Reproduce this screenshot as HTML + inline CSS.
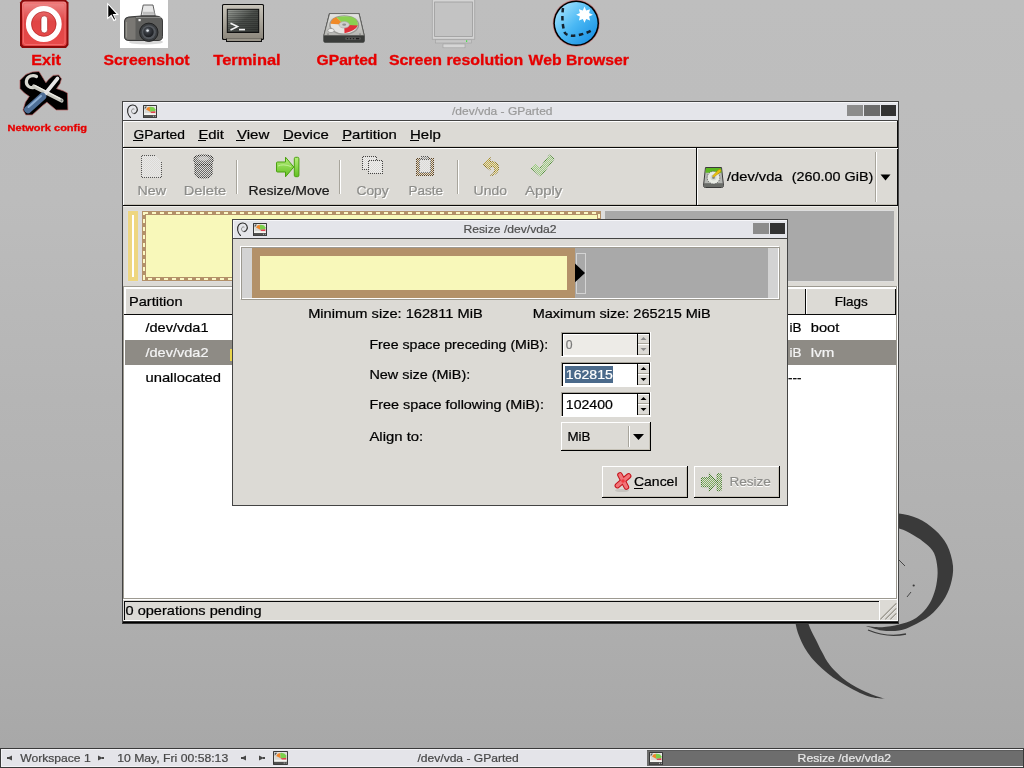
<!DOCTYPE html>
<html><head><meta charset="utf-8"><title>GParted</title>
<style>
html,body{margin:0;padding:0;width:1024px;height:768px;overflow:hidden;background:#b0b0b0;}
svg{display:block;will-change:transform;}
text{font-family:"Liberation Sans",sans-serif;}
</style></head><body>
<svg width="1024" height="768" viewBox="0 0 1024 768" shape-rendering="crispEdges">
<defs><linearGradient id="bg" x1="0" y1="0" x2="0" y2="1"><stop offset="0" stop-color="#bebebe"/><stop offset="0.26" stop-color="#bcbcbc"/><stop offset="0.52" stop-color="#b5b5b5"/><stop offset="0.78" stop-color="#afafaf"/><stop offset="0.945" stop-color="#a9a9a9"/><stop offset="1" stop-color="#a7a7a7"/></linearGradient></defs>
<rect x="0" y="0" width="1024" height="768" fill="url(#bg)" />
<defs><linearGradient id="exitg" x1="0" y1="0" x2="0" y2="1"><stop offset="0" stop-color="#ee8a8a"/><stop offset="0.45" stop-color="#e04545"/><stop offset="1" stop-color="#e84a4a"/></linearGradient><linearGradient id="globeg" x1="0" y1="0" x2="1" y2="1"><stop offset="0" stop-color="#b8ecff"/><stop offset="0.5" stop-color="#4ab8f4"/><stop offset="1" stop-color="#1088e0"/></linearGradient><linearGradient id="scrg" x1="0" y1="0" x2="1" y2="1"><stop offset="0" stop-color="#9a9e98"/><stop offset="0.5" stop-color="#4a4e4a"/><stop offset="1" stop-color="#353835"/></linearGradient><linearGradient id="bezg" x1="0" y1="0" x2="0" y2="1"><stop offset="0" stop-color="#c8c4ba"/><stop offset="1" stop-color="#8c877c"/></linearGradient><linearGradient id="camg" x1="0" y1="0" x2="1" y2="0"><stop offset="0" stop-color="#6a6a66"/><stop offset="0.3" stop-color="#555552"/><stop offset="1" stop-color="#707070"/></linearGradient><radialGradient id="lensg" cx="0.4" cy="0.35" r="0.6"><stop offset="0" stop-color="#9aa0a8"/><stop offset="0.4" stop-color="#3a3e44"/><stop offset="1" stop-color="#1e2024"/></radialGradient><linearGradient id="hddg" x1="0" y1="0" x2="0" y2="1"><stop offset="0" stop-color="#e6e6e4"/><stop offset="1" stop-color="#b4b4b0"/></linearGradient></defs>
<text x="31.2" y="65" font-size="14.2" fill="#e60000" font-weight="bold" textLength="29.600000000000005" lengthAdjust="spacingAndGlyphs" stroke="#e60000" stroke-width="0.3">Exit</text>
<text x="103.5" y="65" font-size="14.2" fill="#e60000" font-weight="bold" textLength="86.1" lengthAdjust="spacingAndGlyphs" stroke="#e60000" stroke-width="0.3">Screenshot</text>
<text x="213.3" y="65" font-size="14.2" fill="#e60000" font-weight="bold" textLength="67.4" lengthAdjust="spacingAndGlyphs" stroke="#e60000" stroke-width="0.3">Terminal</text>
<text x="316.6" y="65" font-size="14.2" fill="#e60000" font-weight="bold" textLength="60.79999999999999" lengthAdjust="spacingAndGlyphs" stroke="#e60000" stroke-width="0.3">GParted</text>
<text x="388.9" y="65" font-size="14.2" fill="#e60000" font-weight="bold" textLength="134.40000000000006" lengthAdjust="spacingAndGlyphs" stroke="#e60000" stroke-width="0.3">Screen resolution</text>
<text x="528.6" y="65" font-size="14.2" fill="#e60000" font-weight="bold" textLength="100.29999999999993" lengthAdjust="spacingAndGlyphs" stroke="#e60000" stroke-width="0.3">Web Browser</text>
<text x="7.6" y="131" font-size="9.4" fill="#e60000" font-weight="bold" textLength="79.4" lengthAdjust="spacingAndGlyphs" stroke="#e60000" stroke-width="0.3">Network config</text>
<g shape-rendering="geometricPrecision"><path d="M22 0 H66 L68.5 2.5 V45 L66 48 H22 L20 45.5 V2.5 Z" fill="#8a0a0a"/><rect x="22" y="1.5" width="44.5" height="44.5" rx="3" fill="url(#exitg)"/><rect x="23.5" y="3" width="41.5" height="41.5" rx="2.5" fill="none" stroke="#f26a6a" stroke-width="1"/><circle cx="43.8" cy="24" r="15.2" fill="none" stroke="#ffffff" stroke-width="5.4"/><circle cx="43.8" cy="24" r="12.3" fill="none" stroke="#a01010" stroke-width="0.8" opacity="0.6"/><rect x="41" y="15.8" width="6.6" height="17.2" rx="3.3" fill="#ffffff" stroke="#a01010" stroke-width="0.6"/></g>
<rect x="120" y="0" width="48" height="48" fill="#ffffff" />
<g shape-rendering="geometricPrecision"><ellipse cx="146" cy="42" rx="17" ry="2.5" fill="#d8d8d8"/><path d="M143.2 5 H153 L155.2 15.8 H141 Z" fill="#e6e6e6" stroke="#505050" stroke-width="0.9"/><rect x="142.8" y="11.8" width="11.6" height="3" fill="#bdbdbd"/><path d="M124.5 21 Q124.5 17.5 128.5 17 L141 16 H156 Q162.5 16.5 162.5 21 V36.5 Q162.5 40.5 158 40.5 H129 Q124.5 40.5 124.5 37 Z" fill="#5e5e5c" stroke="#2e2e2e" stroke-width="0.9"/><path d="M125.3 21.5 Q125.5 18.5 129 18 L135.5 17.6 V39.6 H129 Q125.3 39.6 125.3 36.5 Z" fill="#7a7874"/><path d="M126.5 22 V37.5" stroke="#96948e" stroke-width="1.2"/><path d="M136 17.5 H161" stroke="#8a8a88" stroke-width="1"/><rect x="138.5" y="19" width="2.2" height="2.2" fill="#f0f0f0"/><circle cx="148.8" cy="32.3" r="9.2" fill="#3a3d40" stroke="#1e1e1e" stroke-width="0.9"/><circle cx="148.8" cy="32.3" r="7" fill="#55595e"/><circle cx="148.5" cy="32" r="5.2" fill="url(#lensg)"/><circle cx="147.6" cy="30.6" r="1.2" fill="#e8eef4"/></g>
<g shape-rendering="geometricPrecision"><path d="M107.2 2.5 L107.2 19.6 L111 16.2 L113.6 21.2 L116.4 20 L114 15.2 L119 15 Z" fill="#ffffff"/><path d="M108.3 5 L108.3 17.2 L111.4 14.4 L114.2 19.6 L115.1 19.2 L112.6 14.1 L116.4 13.9 Z" fill="#000000"/></g>
<g shape-rendering="geometricPrecision"><rect x="222" y="4" width="42" height="36" rx="1.5" fill="#0c0c0c"/><rect x="223" y="5" width="40" height="34" rx="1" fill="url(#bezg)"/><rect x="226.8" y="8.8" width="32.4" height="24.2" fill="#101010"/><rect x="227.8" y="9.8" width="30.4" height="22.2" fill="url(#scrg)"/><rect x="228" y="11" width="30" height="1" fill="#000" opacity="0.18"/><rect x="228" y="13" width="30" height="1" fill="#000" opacity="0.18"/><rect x="228" y="15" width="30" height="1" fill="#000" opacity="0.18"/><rect x="228" y="17" width="30" height="1" fill="#000" opacity="0.18"/><rect x="228" y="19" width="30" height="1" fill="#000" opacity="0.18"/><rect x="228" y="21" width="30" height="1" fill="#000" opacity="0.18"/><rect x="228" y="23" width="30" height="1" fill="#000" opacity="0.18"/><rect x="228" y="25" width="30" height="1" fill="#000" opacity="0.18"/><rect x="228" y="27" width="30" height="1" fill="#000" opacity="0.18"/><rect x="228" y="29" width="30" height="1" fill="#000" opacity="0.18"/><rect x="228" y="31" width="30" height="1" fill="#000" opacity="0.18"/><path d="M230.5 23.2 L237.5 26.6 L230.5 30" fill="none" stroke="#f4f4f4" stroke-width="1.6"/><rect x="239" y="28.8" width="6" height="1.6" fill="#f4f4f4"/><rect x="226" y="38.5" width="36" height="3.5" fill="#111"/><rect x="227" y="38.5" width="34" height="2.5" fill="#9a958a"/></g>
<g shape-rendering="geometricPrecision"><path d="M329 13.2 H359.5 L364.8 36 V40.5 Q364.8 42.8 362 42.8 H326 Q323.3 42.8 323.3 40.5 V36 Z" fill="#3a3c3a"/><path d="M329.6 13.6 H359 L364.2 35.5 H323.8 Z" fill="url(#hddg)" stroke="#5a5a58" stroke-width="0.8"/><ellipse cx="344.2" cy="25" rx="15" ry="9.8" fill="#9a9a96"/><ellipse cx="344.2" cy="24.8" rx="13.6" ry="8.6" fill="#e4e4e2"/><path d="M344.2 24.8 L330.6 23.8 Q331 19 336.5 17.3 Z" fill="#f08a28"/><path d="M344.2 24.8 L336.5 17.3 Q344 15.3 351.5 16.8 Q358.5 19.5 357.8 25.5 L353 28.5 Z" fill="#8ad050"/><path d="M344.2 24.8 L357.8 25.5 Q356 30.5 344.5 33.2 Z" fill="#e0303a"/><ellipse cx="344.2" cy="24.8" rx="5.2" ry="3.2" fill="#d0d0ce" stroke="#a8a8a4" stroke-width="0.6"/><ellipse cx="344.2" cy="24.6" rx="2" ry="1.2" fill="#909090"/><ellipse cx="331" cy="30.5" rx="3.2" ry="2.1" fill="#ececea" stroke="#777" stroke-width="0.5"/><circle cx="328" cy="34" r="0.6" fill="#444"/><circle cx="360" cy="34" r="0.6" fill="#444"/><rect x="345" y="37.2" width="16" height="2.8" rx="1.4" fill="#555654"/><circle cx="347.5" cy="38.6" r="0.7" fill="#1a1a1a"/><circle cx="350.5" cy="38.6" r="0.7" fill="#1a1a1a"/><circle cx="353.5" cy="38.6" r="0.7" fill="#1a1a1a"/><rect x="356" y="37.9" width="3.2" height="1.4" fill="#1a1a1a"/></g>
<g shape-rendering="geometricPrecision"><rect x="432.3" y="-1" width="42.4" height="40.3" fill="#d4d4d4" stroke="#a8a8a8" stroke-width="0.9"/><rect x="434.6" y="2" width="37.8" height="34.4" fill="#c3c3c3" stroke="#9c9c9c" stroke-width="0.8"/><rect x="435.5" y="39.8" width="36" height="3.2" fill="#c8c8c8" stroke="#a0a0a0" stroke-width="0.6"/><rect x="466" y="40.3" width="1.2" height="1.6" fill="#40e040"/><rect x="443" y="44" width="22" height="3.8" fill="#d6d6d6" stroke="#a0a0a0" stroke-width="0.6"/></g>
<g shape-rendering="geometricPrecision"><circle cx="576.2" cy="23.2" r="23.5" fill="#c88080"/><circle cx="576.2" cy="23.2" r="22.8" fill="#000"/><circle cx="576.2" cy="23.2" r="21.3" fill="url(#globeg)"/><path transform="translate(584.5,14.8) scale(1.12) translate(-584.5,-14.8)" d="M584.5 7.5 L586 11 L589.5 9.8 L588.6 13.2 L592 14.8 L588.6 16.4 L589.5 19.8 L586 18.6 L584.5 22 L583 18.6 L579.5 19.8 L580.4 16.4 L577 14.8 L580.4 13.2 L579.5 9.8 L583 11 Z" fill="#ffffff"/><path d="M563 8 C562 15 562 26 565 33 C568 37 575 36 581 34.5 C585 33.5 589 32 592 30" fill="none" stroke="#14222e" stroke-width="2.5" stroke-dasharray="4.5 3.5"/></g>
<g shape-rendering="geometricPrecision"><path d="M20 80.3 L25.9 74.4 L32.2 72 L39 71.5 L45.9 82.7 L48.8 79.3 L53.2 75.4 L58.6 74.9 L61.5 78.8 L60 83.7 L56.6 88.6 L63.5 91 L67.4 93 L67.9 110 L56.2 110 L46.9 102.2 L43 105.2 L32.2 114.9 L25.9 114.9 L23 110 L25.4 102.2 L29.3 96.4 L24.4 93 L20 88.6 Z" fill="#000" stroke="#b86060" stroke-width="0.7"/><path d="M36.5 76.5 C33 74.5 27.5 76 26.5 80.5 C25.5 85 29.5 88.5 34 87.5" fill="none" stroke="#d8d8d0" stroke-width="3.2" stroke-linecap="round"/><path d="M34 86.5 L61.5 100.5" fill="none" stroke="#c8c8c0" stroke-width="4.2" stroke-linecap="round"/><path d="M35 85.5 L60 98.5" fill="none" stroke="#efefe8" stroke-width="1.2" stroke-linecap="round"/><circle cx="61.5" cy="100.5" r="1" fill="#777"/><path d="M45 94 L57.5 78.5" stroke="#e6e6e6" stroke-width="3.6" stroke-linecap="round"/><path d="M28 109.5 L42.5 96.5" stroke="#4e6e96" stroke-width="7.5" stroke-linecap="round"/><path d="M28.5 107 L41 96" stroke="#8eaed2" stroke-width="2" stroke-linecap="round"/></g>
<g shape-rendering="geometricPrecision"><path d="M880.0 512.5 C883.2 512.7 892.7 512.5 899.0 513.5 C905.3 514.5 912.0 515.8 918.0 518.5 C924.0 521.2 930.2 525.6 935.0 530.0 C939.8 534.4 944.0 539.0 947.0 545.0 C950.0 551.0 952.4 559.3 953.0 566.0 C953.6 572.7 952.2 579.2 950.5 585.0 C948.8 590.8 946.4 595.9 943.0 601.0 C939.6 606.1 935.0 611.4 930.0 615.5 C925.0 619.6 918.2 623.0 913.0 625.5 C907.8 628.0 904.2 629.7 899.0 630.5 C893.8 631.3 887.5 631.2 882.0 630.5 C876.5 629.8 868.7 626.8 866.0 626.0 L866.0 626.0 C868.7 626.2 876.5 627.4 882.0 627.2 C887.5 627.0 893.8 625.8 899.0 624.6 C904.2 623.4 908.8 622.1 913.0 619.8 C917.2 617.5 920.9 614.3 924.0 611.0 C927.1 607.7 929.5 604.3 931.5 600.0 C933.5 595.7 935.3 590.2 936.3 585.0 C937.3 579.8 937.9 574.3 937.5 569.0 C937.1 563.7 936.0 557.2 934.0 553.0 C932.0 548.8 928.8 546.4 925.5 543.5 C922.2 540.6 918.4 538.0 914.0 535.5 C909.6 533.0 904.7 529.9 899.0 528.5 C893.3 527.1 883.2 527.2 880.0 527.0 Z" fill="#3a3a3a"/><path d="M794.0 605.0 C794.3 608.3 794.7 619.1 795.8 624.8 C796.8 630.5 798.6 634.8 800.3 639.0 C802.0 643.2 803.9 646.6 806.0 650.0 C808.1 653.4 810.3 656.4 813.0 659.5 C815.7 662.6 818.7 665.5 822.0 668.5 C825.3 671.5 829.0 674.7 833.0 677.5 C837.0 680.3 841.5 682.9 846.0 685.5 C850.5 688.1 855.7 691.0 860.0 693.0 C864.3 695.0 867.8 696.3 872.0 697.3 C876.2 698.3 882.8 698.7 885.0 699.0 L885.0 699.0 C881.8 697.8 872.3 694.9 866.0 692.0 C859.7 689.1 853.0 685.9 847.0 681.5 C841.0 677.1 834.5 670.6 830.3 665.7 C826.1 660.8 824.5 656.5 822.0 652.0 C819.5 647.5 817.5 643.0 815.5 639.0 C813.5 635.0 811.6 632.0 810.0 628.0 C808.4 624.0 807.0 618.8 806.0 615.0 C805.0 611.2 804.3 606.7 804.0 605.0 Z" fill="#3a3a3a"/><path d="M868 630 C880 635 892 637 906 634" fill="none" stroke="#3a3a3a" stroke-width="1.3"/><circle cx="913.7" cy="585.5" r="1.1" fill="#3a3a3a"/><path d="M907 597 L911 592" stroke="#3a3a3a" stroke-width="0.9"/><path d="M899 560 L905 566" stroke="#3a3a3a" stroke-width="0.9"/></g>
<rect x="122" y="101" width="777" height="523" fill="#444444" />
<rect x="123" y="102" width="775" height="18" fill="#e4e5ea" />
<rect x="123" y="102" width="775" height="1" fill="#f6f6f9" />
<rect x="123" y="102" width="1" height="18" fill="#f6f6f9" />
<rect x="123" y="120" width="775" height="1" fill="#444444" />
<g transform="translate(128,111)" shape-rendering="geometricPrecision" fill="none" stroke-linecap="round"><path d="M2.5 6.5 C-0.5 4 -1.5 -1.5 0.8 -4.2 C2.8 -6.6 7.2 -6.6 8.8 -3.6 C10.2 -0.8 8.4 2.6 6 2.6" stroke="#2a2a2a" stroke-width="1.1"/><path d="M6 2.6 C4.2 2.8 3.2 1.2 3.6 -0.6 C3.9 -1.8 5 -2.4 6 -2" stroke="#7a7a7a" stroke-width="0.9"/></g>
<g transform="translate(143,105) scale(1.0)" shape-rendering="geometricPrecision"><rect x="0" y="0" width="14" height="13" rx="0.6" fill="#383838"/><rect x="1" y="1" width="12" height="9.2" fill="#f4f4f0"/><rect x="1.6" y="1.6" width="10.8" height="7.2" fill="#d8d8d4"/><path d="M1.6 1.6 H4 L1.6 4.5 Z" fill="#555"/><path d="M7.2 6.8 L3 4.6 Q4 2 6.8 1.8 Z" fill="#f0862a"/><path d="M7.2 6.8 L6.8 1.8 Q10.8 1.4 12.4 4.2 L12.4 6.3 Z" fill="#7ad04a"/><path d="M7.2 6.8 L12.4 6.3 L12.4 8.2 L8.4 8.2 Z" fill="#e04450"/><rect x="1.6" y="8.2" width="10.8" height="1.2" fill="#f4f4f0"/><rect x="1" y="10.2" width="12" height="2.2" fill="#525250"/><rect x="10" y="10.8" width="1" height="1" fill="#bbb"/><rect x="12" y="10.8" width="0.8" height="1" fill="#bbb"/></g>
<rect x="847" y="105" width="16" height="11" fill="#8c8c8c" />
<rect x="864" y="105" width="16" height="11" fill="#6c6c6c" />
<rect x="881" y="105" width="15" height="11" fill="#333333" />
<text x="452" y="115" font-size="11.6" fill="#9a9a9a" font-weight="normal" textLength="100.5" lengthAdjust="spacingAndGlyphs"  stroke="#9a9a9a" stroke-width="0.22">/dev/vda - GParted</text>
<rect x="123" y="121" width="775" height="501" fill="#dcdad5" />
<rect x="123" y="121" width="775" height="1" fill="#ffffff" />
<rect x="123" y="121" width="1" height="26" fill="#ffffff" />
<rect x="124" y="146" width="773" height="1" fill="#c9c5bb" />
<rect x="123" y="147" width="775" height="1" fill="#0a0a0a" />
<rect x="897" y="121" width="1" height="85" fill="#0a0a0a" />
<rect x="897" y="206" width="1" height="80" fill="#e8e7e3" />
<rect x="897" y="286" width="1" height="335" fill="#ffffff" />
<text x="133.4" y="139" font-size="13.4" fill="#000" font-weight="normal" textLength="51.5" lengthAdjust="spacingAndGlyphs"  stroke="#000" stroke-width="0.22">GParted</text>
<rect x="133" y="140" width="10" height="1" fill="#000" />
<text x="198.4" y="139" font-size="13.4" fill="#000" font-weight="normal" textLength="25.6" lengthAdjust="spacingAndGlyphs"  stroke="#000" stroke-width="0.22">Edit</text>
<rect x="198" y="140" width="8" height="1" fill="#000" />
<text x="236.9" y="139" font-size="13.4" fill="#000" font-weight="normal" textLength="32.4" lengthAdjust="spacingAndGlyphs"  stroke="#000" stroke-width="0.22">View</text>
<rect x="236" y="140" width="9" height="1" fill="#000" />
<text x="283.1" y="139" font-size="13.4" fill="#000" font-weight="normal" textLength="45.6" lengthAdjust="spacingAndGlyphs"  stroke="#000" stroke-width="0.22">Device</text>
<rect x="283" y="140" width="10" height="1" fill="#000" />
<text x="342.2" y="139" font-size="13.4" fill="#000" font-weight="normal" textLength="54.6" lengthAdjust="spacingAndGlyphs"  stroke="#000" stroke-width="0.22">Partition</text>
<rect x="342" y="140" width="9" height="1" fill="#000" />
<text x="410" y="139" font-size="13.4" fill="#000" font-weight="normal" textLength="30.8" lengthAdjust="spacingAndGlyphs"  stroke="#000" stroke-width="0.22">Help</text>
<rect x="410" y="140" width="9" height="1" fill="#000" />
<rect x="123" y="148" width="775" height="1" fill="#ffffff" />
<rect x="123" y="148" width="1" height="57" fill="#ffffff" />
<rect x="124" y="204" width="773" height="1" fill="#c4c0b5" />
<rect x="123" y="205" width="775" height="1" fill="#0a0a0a" />
<text x="138.5" y="196" font-size="13.4" fill="#ffffff" font-weight="normal" textLength="28.5" lengthAdjust="spacingAndGlyphs"  stroke="#ffffff" stroke-width="0.22">New</text>
<text x="137.5" y="195" font-size="13.4" fill="#8d8d8a" font-weight="normal" textLength="28.5" lengthAdjust="spacingAndGlyphs"  stroke="#8d8d8a" stroke-width="0.22">New</text>
<text x="184.7" y="196" font-size="13.4" fill="#ffffff" font-weight="normal" textLength="42.5" lengthAdjust="spacingAndGlyphs"  stroke="#ffffff" stroke-width="0.22">Delete</text>
<text x="183.7" y="195" font-size="13.4" fill="#8d8d8a" font-weight="normal" textLength="42.5" lengthAdjust="spacingAndGlyphs"  stroke="#8d8d8a" stroke-width="0.22">Delete</text>
<text x="248.6" y="195" font-size="13.4" fill="#1a1a1a" font-weight="normal" textLength="81.0" lengthAdjust="spacingAndGlyphs"  stroke="#1a1a1a" stroke-width="0.22">Resize/Move</text>
<text x="357.4" y="196" font-size="13.4" fill="#ffffff" font-weight="normal" textLength="32.3" lengthAdjust="spacingAndGlyphs"  stroke="#ffffff" stroke-width="0.22">Copy</text>
<text x="356.4" y="195" font-size="13.4" fill="#8d8d8a" font-weight="normal" textLength="32.3" lengthAdjust="spacingAndGlyphs"  stroke="#8d8d8a" stroke-width="0.22">Copy</text>
<text x="409.4" y="196" font-size="13.4" fill="#ffffff" font-weight="normal" textLength="34.7" lengthAdjust="spacingAndGlyphs"  stroke="#ffffff" stroke-width="0.22">Paste</text>
<text x="408.4" y="195" font-size="13.4" fill="#8d8d8a" font-weight="normal" textLength="34.7" lengthAdjust="spacingAndGlyphs"  stroke="#8d8d8a" stroke-width="0.22">Paste</text>
<text x="474.6" y="196" font-size="13.4" fill="#ffffff" font-weight="normal" textLength="33.5" lengthAdjust="spacingAndGlyphs"  stroke="#ffffff" stroke-width="0.22">Undo</text>
<text x="473.6" y="195" font-size="13.4" fill="#8d8d8a" font-weight="normal" textLength="33.5" lengthAdjust="spacingAndGlyphs"  stroke="#8d8d8a" stroke-width="0.22">Undo</text>
<text x="526.1" y="196" font-size="13.4" fill="#ffffff" font-weight="normal" textLength="37.1" lengthAdjust="spacingAndGlyphs"  stroke="#ffffff" stroke-width="0.22">Apply</text>
<text x="525.1" y="195" font-size="13.4" fill="#8d8d8a" font-weight="normal" textLength="37.1" lengthAdjust="spacingAndGlyphs"  stroke="#8d8d8a" stroke-width="0.22">Apply</text>
<rect x="236" y="160" width="1" height="34" fill="#a8a59c" />
<rect x="237" y="160" width="1" height="34" fill="#ffffff" />
<rect x="339" y="160" width="1" height="34" fill="#a8a59c" />
<rect x="340" y="160" width="1" height="34" fill="#ffffff" />
<rect x="457" y="160" width="1" height="34" fill="#a8a59c" />
<rect x="458" y="160" width="1" height="34" fill="#ffffff" />
<rect x="696" y="148" width="1" height="57" fill="#0a0a0a" />
<rect x="697" y="148" width="1" height="57" fill="#ffffff" />
<text x="727" y="180.5" font-size="13.4" fill="#000" font-weight="normal" textLength="55.5" lengthAdjust="spacingAndGlyphs"  stroke="#000" stroke-width="0.22">/dev/vda</text>
<text x="791.8" y="180.5" font-size="13.4" fill="#000" font-weight="normal" textLength="81.5" lengthAdjust="spacingAndGlyphs"  stroke="#000" stroke-width="0.22">(260.00 GiB)</text>
<rect x="875" y="152" width="1" height="50" fill="#a8a59c" />
<rect x="876" y="152" width="1" height="50" fill="#ffffff" />
<path d="M880.5 174.5 L890.5 174.5 L885.5 180.5 Z" fill="#000" shape-rendering="geometricPrecision"/>
<rect x="123" y="206" width="775" height="1" fill="#eeede9" />
<rect x="127" y="210" width="767" height="72" fill="#dddddd" />
<rect x="128" y="211" width="10" height="70" fill="#eed680" />
<rect x="132" y="215" width="2" height="62" fill="#ffffff" />
<rect x="142" y="211" width="459" height="70" fill="#b39169" />
<rect x="146" y="215" width="451" height="62" fill="#f8f8ba" />
<rect x="144" y="212" width="4" height="2" fill="#fbf8c4" />
<rect x="152" y="212" width="4" height="2" fill="#fbf8c4" />
<rect x="160" y="212" width="4" height="2" fill="#fbf8c4" />
<rect x="168" y="212" width="4" height="2" fill="#fbf8c4" />
<rect x="176" y="212" width="4" height="2" fill="#fbf8c4" />
<rect x="184" y="212" width="4" height="2" fill="#fbf8c4" />
<rect x="192" y="212" width="4" height="2" fill="#fbf8c4" />
<rect x="200" y="212" width="4" height="2" fill="#fbf8c4" />
<rect x="208" y="212" width="4" height="2" fill="#fbf8c4" />
<rect x="216" y="212" width="4" height="2" fill="#fbf8c4" />
<rect x="224" y="212" width="4" height="2" fill="#fbf8c4" />
<rect x="232" y="212" width="4" height="2" fill="#fbf8c4" />
<rect x="240" y="212" width="4" height="2" fill="#fbf8c4" />
<rect x="248" y="212" width="4" height="2" fill="#fbf8c4" />
<rect x="256" y="212" width="4" height="2" fill="#fbf8c4" />
<rect x="264" y="212" width="4" height="2" fill="#fbf8c4" />
<rect x="272" y="212" width="4" height="2" fill="#fbf8c4" />
<rect x="280" y="212" width="4" height="2" fill="#fbf8c4" />
<rect x="288" y="212" width="4" height="2" fill="#fbf8c4" />
<rect x="296" y="212" width="4" height="2" fill="#fbf8c4" />
<rect x="304" y="212" width="4" height="2" fill="#fbf8c4" />
<rect x="312" y="212" width="4" height="2" fill="#fbf8c4" />
<rect x="320" y="212" width="4" height="2" fill="#fbf8c4" />
<rect x="328" y="212" width="4" height="2" fill="#fbf8c4" />
<rect x="336" y="212" width="4" height="2" fill="#fbf8c4" />
<rect x="344" y="212" width="4" height="2" fill="#fbf8c4" />
<rect x="352" y="212" width="4" height="2" fill="#fbf8c4" />
<rect x="360" y="212" width="4" height="2" fill="#fbf8c4" />
<rect x="368" y="212" width="4" height="2" fill="#fbf8c4" />
<rect x="376" y="212" width="4" height="2" fill="#fbf8c4" />
<rect x="384" y="212" width="4" height="2" fill="#fbf8c4" />
<rect x="392" y="212" width="4" height="2" fill="#fbf8c4" />
<rect x="400" y="212" width="4" height="2" fill="#fbf8c4" />
<rect x="408" y="212" width="4" height="2" fill="#fbf8c4" />
<rect x="416" y="212" width="4" height="2" fill="#fbf8c4" />
<rect x="424" y="212" width="4" height="2" fill="#fbf8c4" />
<rect x="432" y="212" width="4" height="2" fill="#fbf8c4" />
<rect x="440" y="212" width="4" height="2" fill="#fbf8c4" />
<rect x="448" y="212" width="4" height="2" fill="#fbf8c4" />
<rect x="456" y="212" width="4" height="2" fill="#fbf8c4" />
<rect x="464" y="212" width="4" height="2" fill="#fbf8c4" />
<rect x="472" y="212" width="4" height="2" fill="#fbf8c4" />
<rect x="480" y="212" width="4" height="2" fill="#fbf8c4" />
<rect x="488" y="212" width="4" height="2" fill="#fbf8c4" />
<rect x="496" y="212" width="4" height="2" fill="#fbf8c4" />
<rect x="504" y="212" width="4" height="2" fill="#fbf8c4" />
<rect x="512" y="212" width="4" height="2" fill="#fbf8c4" />
<rect x="520" y="212" width="4" height="2" fill="#fbf8c4" />
<rect x="528" y="212" width="4" height="2" fill="#fbf8c4" />
<rect x="536" y="212" width="4" height="2" fill="#fbf8c4" />
<rect x="544" y="212" width="4" height="2" fill="#fbf8c4" />
<rect x="552" y="212" width="4" height="2" fill="#fbf8c4" />
<rect x="560" y="212" width="4" height="2" fill="#fbf8c4" />
<rect x="568" y="212" width="4" height="2" fill="#fbf8c4" />
<rect x="576" y="212" width="4" height="2" fill="#fbf8c4" />
<rect x="584" y="212" width="4" height="2" fill="#fbf8c4" />
<rect x="592" y="212" width="4" height="2" fill="#fbf8c4" />
<rect x="148" y="278" width="4" height="2" fill="#fbf8c4" />
<rect x="156" y="278" width="4" height="2" fill="#fbf8c4" />
<rect x="164" y="278" width="4" height="2" fill="#fbf8c4" />
<rect x="172" y="278" width="4" height="2" fill="#fbf8c4" />
<rect x="180" y="278" width="4" height="2" fill="#fbf8c4" />
<rect x="188" y="278" width="4" height="2" fill="#fbf8c4" />
<rect x="196" y="278" width="4" height="2" fill="#fbf8c4" />
<rect x="204" y="278" width="4" height="2" fill="#fbf8c4" />
<rect x="212" y="278" width="4" height="2" fill="#fbf8c4" />
<rect x="220" y="278" width="4" height="2" fill="#fbf8c4" />
<rect x="228" y="278" width="4" height="2" fill="#fbf8c4" />
<rect x="236" y="278" width="4" height="2" fill="#fbf8c4" />
<rect x="244" y="278" width="4" height="2" fill="#fbf8c4" />
<rect x="252" y="278" width="4" height="2" fill="#fbf8c4" />
<rect x="260" y="278" width="4" height="2" fill="#fbf8c4" />
<rect x="268" y="278" width="4" height="2" fill="#fbf8c4" />
<rect x="276" y="278" width="4" height="2" fill="#fbf8c4" />
<rect x="284" y="278" width="4" height="2" fill="#fbf8c4" />
<rect x="292" y="278" width="4" height="2" fill="#fbf8c4" />
<rect x="300" y="278" width="4" height="2" fill="#fbf8c4" />
<rect x="308" y="278" width="4" height="2" fill="#fbf8c4" />
<rect x="316" y="278" width="4" height="2" fill="#fbf8c4" />
<rect x="324" y="278" width="4" height="2" fill="#fbf8c4" />
<rect x="332" y="278" width="4" height="2" fill="#fbf8c4" />
<rect x="340" y="278" width="4" height="2" fill="#fbf8c4" />
<rect x="348" y="278" width="4" height="2" fill="#fbf8c4" />
<rect x="356" y="278" width="4" height="2" fill="#fbf8c4" />
<rect x="364" y="278" width="4" height="2" fill="#fbf8c4" />
<rect x="372" y="278" width="4" height="2" fill="#fbf8c4" />
<rect x="380" y="278" width="4" height="2" fill="#fbf8c4" />
<rect x="388" y="278" width="4" height="2" fill="#fbf8c4" />
<rect x="396" y="278" width="4" height="2" fill="#fbf8c4" />
<rect x="404" y="278" width="4" height="2" fill="#fbf8c4" />
<rect x="412" y="278" width="4" height="2" fill="#fbf8c4" />
<rect x="420" y="278" width="4" height="2" fill="#fbf8c4" />
<rect x="428" y="278" width="4" height="2" fill="#fbf8c4" />
<rect x="436" y="278" width="4" height="2" fill="#fbf8c4" />
<rect x="444" y="278" width="4" height="2" fill="#fbf8c4" />
<rect x="452" y="278" width="4" height="2" fill="#fbf8c4" />
<rect x="460" y="278" width="4" height="2" fill="#fbf8c4" />
<rect x="468" y="278" width="4" height="2" fill="#fbf8c4" />
<rect x="476" y="278" width="4" height="2" fill="#fbf8c4" />
<rect x="484" y="278" width="4" height="2" fill="#fbf8c4" />
<rect x="492" y="278" width="4" height="2" fill="#fbf8c4" />
<rect x="500" y="278" width="4" height="2" fill="#fbf8c4" />
<rect x="508" y="278" width="4" height="2" fill="#fbf8c4" />
<rect x="516" y="278" width="4" height="2" fill="#fbf8c4" />
<rect x="524" y="278" width="4" height="2" fill="#fbf8c4" />
<rect x="532" y="278" width="4" height="2" fill="#fbf8c4" />
<rect x="540" y="278" width="4" height="2" fill="#fbf8c4" />
<rect x="548" y="278" width="4" height="2" fill="#fbf8c4" />
<rect x="556" y="278" width="4" height="2" fill="#fbf8c4" />
<rect x="564" y="278" width="4" height="2" fill="#fbf8c4" />
<rect x="572" y="278" width="4" height="2" fill="#fbf8c4" />
<rect x="580" y="278" width="4" height="2" fill="#fbf8c4" />
<rect x="588" y="278" width="4" height="2" fill="#fbf8c4" />
<rect x="596" y="278" width="4" height="2" fill="#fbf8c4" />
<rect x="143" y="212" width="1" height="2" fill="#fbf8c4" />
<rect x="143" y="278" width="2" height="2" fill="#fbf8c4" />
<rect x="143" y="212" width="2" height="3" fill="#fbf8c4" />
<rect x="143" y="219" width="2" height="4" fill="#fbf8c4" />
<rect x="143" y="227" width="2" height="4" fill="#fbf8c4" />
<rect x="143" y="235" width="2" height="4" fill="#fbf8c4" />
<rect x="143" y="243" width="2" height="4" fill="#fbf8c4" />
<rect x="143" y="251" width="2" height="4" fill="#fbf8c4" />
<rect x="143" y="259" width="2" height="4" fill="#fbf8c4" />
<rect x="143" y="267" width="2" height="4" fill="#fbf8c4" />
<rect x="143" y="275" width="2" height="4" fill="#fbf8c4" />
<rect x="598" y="214" width="2" height="4" fill="#fbf8c4" />
<rect x="598" y="222" width="2" height="4" fill="#fbf8c4" />
<rect x="598" y="230" width="2" height="4" fill="#fbf8c4" />
<rect x="598" y="238" width="2" height="4" fill="#fbf8c4" />
<rect x="598" y="246" width="2" height="4" fill="#fbf8c4" />
<rect x="598" y="254" width="2" height="4" fill="#fbf8c4" />
<rect x="598" y="262" width="2" height="4" fill="#fbf8c4" />
<rect x="598" y="270" width="2" height="4" fill="#fbf8c4" />
<rect x="598" y="278" width="2" height="2" fill="#fbf8c4" />
<rect x="605" y="211" width="289" height="70" fill="#a9a9a9" />
<rect x="123" y="286" width="774" height="1" fill="#9d9a91" />
<rect x="123" y="286" width="1" height="313" fill="#9d9a91" />
<rect x="124" y="287" width="772" height="312" fill="#ffffff" />
<rect x="126" y="289" width="770" height="25" fill="#dcdad5" />
<rect x="124" y="288" width="772" height="1" fill="#ffffff" />
<rect x="125" y="288" width="1" height="26" fill="#ffffff" />
<rect x="124" y="314" width="773" height="1" fill="#0a0a0a" />
<rect x="805" y="289" width="1" height="25" fill="#0a0a0a" />
<rect x="806" y="289" width="1" height="25" fill="#ffffff" />
<rect x="895" y="289" width="1" height="26" fill="#0a0a0a" />
<text x="129" y="306" font-size="13.4" fill="#000" font-weight="normal" textLength="53.5" lengthAdjust="spacingAndGlyphs"  stroke="#000" stroke-width="0.22">Partition</text>
<text x="834.7" y="306" font-size="13.4" fill="#000" font-weight="normal" textLength="33" lengthAdjust="spacingAndGlyphs"  stroke="#000" stroke-width="0.22">Flags</text>
<rect x="125" y="340" width="771" height="25" fill="#8e8b85" />
<text x="145.5" y="332" font-size="13.4" fill="#000" font-weight="normal" textLength="63" lengthAdjust="spacingAndGlyphs"  stroke="#000" stroke-width="0.22">/dev/vda1</text>
<text x="145.5" y="357" font-size="13.4" fill="#f4f4f4" font-weight="normal" textLength="63" lengthAdjust="spacingAndGlyphs"  stroke="#f4f4f4" stroke-width="0.22">/dev/vda2</text>
<text x="145.5" y="382" font-size="13.4" fill="#000" font-weight="normal" textLength="75.5" lengthAdjust="spacingAndGlyphs"  stroke="#000" stroke-width="0.22">unallocated</text>
<text x="789.6" y="332" font-size="13.4" fill="#000" font-weight="normal" textLength="12" lengthAdjust="spacingAndGlyphs"  stroke="#000" stroke-width="0.22">iB</text>
<text x="810.8" y="332" font-size="13.4" fill="#000" font-weight="normal" textLength="28.5" lengthAdjust="spacingAndGlyphs"  stroke="#000" stroke-width="0.22">boot</text>
<text x="789.6" y="357" font-size="13.4" fill="#f4f4f4" font-weight="normal" textLength="12" lengthAdjust="spacingAndGlyphs"  stroke="#f4f4f4" stroke-width="0.22">iB</text>
<text x="810.8" y="357" font-size="13.4" fill="#f4f4f4" font-weight="normal" textLength="23.5" lengthAdjust="spacingAndGlyphs"  stroke="#f4f4f4" stroke-width="0.22">lvm</text>
<text x="788" y="382" font-size="13.4" fill="#000" font-weight="normal" textLength="13.5" lengthAdjust="spacingAndGlyphs"  stroke="#000" stroke-width="0.22">---</text>
<rect x="123" y="598" width="774" height="1" fill="#9d9a91" />
<rect x="896" y="286" width="1" height="313" fill="#9d9a91" />
<rect x="123" y="599" width="775" height="1" fill="#ffffff" />
<rect x="124" y="601" width="756" height="1" fill="#0a0a0a" />
<rect x="124" y="601" width="1" height="19" fill="#0a0a0a" />
<rect x="125" y="602" width="754" height="18" fill="#dcdad5" />
<rect x="879" y="601" width="1" height="20" fill="#ffffff" />
<rect x="124" y="620" width="774" height="1" fill="#ffffff" />
<text x="125.5" y="614.8" font-size="13.4" fill="#000" font-weight="normal" textLength="136" lengthAdjust="spacingAndGlyphs"  stroke="#000" stroke-width="0.22">0 operations pending</text>
<rect x="880" y="602" width="17" height="18" fill="#dcdad5" />
<g shape-rendering="geometricPrecision" stroke-linecap="round"><line x1="881.5" y1="619.5" x2="896.5" y2="604.5" stroke="#ffffff" stroke-width="1"/><line x1="886.5" y1="619.5" x2="896.5" y2="609.5" stroke="#ffffff" stroke-width="1"/><line x1="891.5" y1="619.5" x2="896.5" y2="614.5" stroke="#ffffff" stroke-width="1"/><line x1="880.8" y1="619" x2="896" y2="603.8" stroke="#9d9a91" stroke-width="1.3"/><line x1="885.8" y1="619" x2="896" y2="608.8" stroke="#9d9a91" stroke-width="1.3"/><line x1="890.8" y1="619" x2="896" y2="613.8" stroke="#9d9a91" stroke-width="1.3"/></g>
<rect x="123" y="621" width="775" height="1" fill="#333333" />
<rect x="123" y="622" width="775" height="1" fill="#000000" />
<rect x="122" y="623" width="777" height="1" fill="#333333" />
<defs><pattern id="chk" patternUnits="userSpaceOnUse" width="2" height="2"><rect x="0" y="0" width="1" height="1" fill="#000"/><rect x="1" y="1" width="1" height="1" fill="#000"/></pattern><mask id="dither" maskUnits="userSpaceOnUse" x="0" y="0" width="1024" height="768"><rect x="0" y="0" width="1024" height="768" fill="#fff"/><rect x="0" y="0" width="1024" height="768" fill="url(#chk)"/></mask><linearGradient id="grn" x1="0" y1="0" x2="0" y2="1"><stop offset="0" stop-color="#b6ee7a"/><stop offset="1" stop-color="#62c020"/></linearGradient></defs>
<g mask="url(#dither)" shape-rendering="crispEdges"><path d="M141 155 H155 L161 161 V177 H141 Z" fill="#e8e8e8" stroke="#555" stroke-width="1"/></g>
<g mask="url(#dither)" shape-rendering="geometricPrecision"><path d="M194 159 Q194 155 203.5 155 Q213 155 213 159 V161 Q211 164 212 168 V174 Q212 178 203.5 178 Q195 178 195 174 V168 Q196 164 194 161 Z" fill="#6a6a6a" stroke="#222" stroke-width="1"/><ellipse cx="203.5" cy="158.5" rx="6" ry="2.2" fill="#bbb"/><rect x="195" y="164" width="17" height="1.5" fill="#333"/></g>
<g shape-rendering="geometricPrecision"><path d="M276.5 163 Q276.5 162 277.5 162 H285.5 V157.2 L293.8 167 L285.5 176.8 V172 H277.5 Q276.5 172 276.5 171 Z" fill="url(#grn)" stroke="#4aa010" stroke-width="1"/><path d="M278 166 Q283 163.5 291 166.5" stroke="#d4f8b0" stroke-width="1" fill="none" opacity="0.7"/><rect x="294.3" y="157.3" width="4.6" height="19.4" rx="1.4" fill="url(#grn)" stroke="#4aa010" stroke-width="1"/></g>
<g mask="url(#dither)" shape-rendering="crispEdges"><rect x="362.5" y="156.5" width="14" height="13" fill="#eeeeee" stroke="#444" stroke-width="1"/><rect x="368.5" y="160.5" width="14" height="13" fill="#eeeeee" stroke="#444" stroke-width="1"/></g>
<g mask="url(#dither)" shape-rendering="crispEdges"><rect x="416.5" y="158.5" width="17" height="17" fill="#8a6a3a" stroke="#5a4020" stroke-width="1"/><rect x="419.5" y="159.5" width="11" height="13" fill="#e8e8e8" stroke="#777" stroke-width="1"/><rect x="421.5" y="156.5" width="7" height="3" fill="#999" stroke="#555" stroke-width="1"/></g>
<g mask="url(#dither)" shape-rendering="geometricPrecision"><path d="M490 157 L483 164.5 L490 170 V166.5 Q495 166 495 170 Q495 173 490.5 175.8 Q498.5 174.5 498.5 168 Q498.5 161.5 490 161.5 Z" fill="#c8b040" stroke="#8a7010" stroke-width="1"/></g>
<g mask="url(#dither)" shape-rendering="geometricPrecision"><path d="M531 168 L535.5 163.5 L540 168 L549.5 155 L554 159 L540.5 176.5 Z" fill="#9ccf80" stroke="#4a8a30" stroke-width="1"/></g>
<g shape-rendering="geometricPrecision"><path d="M705.5 167.5 H721.5 L723.5 185.5 Q723.5 187.5 721.5 187.5 H705.5 Q703.5 187.5 703.5 185.5 Z" fill="#b4b6b2" stroke="#3a3a3a" stroke-width="1"/><path d="M706 168 H721 L721.6 172.8 H705.4 Z" fill="#5cb820"/><rect x="704" y="183.2" width="19" height="3.8" fill="#6a6c68"/><circle cx="713.5" cy="177.6" r="6.3" fill="#e8ebe4" stroke="#555" stroke-width="0.8" stroke-dasharray="1.3 1.1"/><circle cx="713.5" cy="177.6" r="3" fill="#d4d8d0"/><ellipse cx="713.5" cy="177.8" rx="1.6" ry="1.1" fill="#8a8a8a"/><path d="M712.3 176.2 L718.2 170 Q720.4 168.4 721 170.5 Q721 171.8 719.6 172.8 L713.6 177.2 Z" fill="#e8c010" stroke="#a88400" stroke-width="0.5"/></g>
<rect x="230" y="349" width="2" height="12" fill="#e8d44d" />
<rect x="232" y="219" width="556" height="287" fill="#444444" />
<rect x="233" y="220" width="554" height="18" fill="#e4e5ea" />
<rect x="233" y="220" width="554" height="1" fill="#f6f6f9" />
<rect x="233" y="220" width="1" height="18" fill="#f6f6f9" />
<rect x="233" y="238" width="554" height="1" fill="#444444" />
<g transform="translate(238,229)" shape-rendering="geometricPrecision" fill="none" stroke-linecap="round"><path d="M2.5 6.5 C-0.5 4 -1.5 -1.5 0.8 -4.2 C2.8 -6.6 7.2 -6.6 8.8 -3.6 C10.2 -0.8 8.4 2.6 6 2.6" stroke="#2a2a2a" stroke-width="1.1"/><path d="M6 2.6 C4.2 2.8 3.2 1.2 3.6 -0.6 C3.9 -1.8 5 -2.4 6 -2" stroke="#7a7a7a" stroke-width="0.9"/></g>
<g transform="translate(253,223) scale(1.0)" shape-rendering="geometricPrecision"><rect x="0" y="0" width="14" height="13" rx="0.6" fill="#383838"/><rect x="1" y="1" width="12" height="9.2" fill="#f4f4f0"/><rect x="1.6" y="1.6" width="10.8" height="7.2" fill="#d8d8d4"/><path d="M1.6 1.6 H4 L1.6 4.5 Z" fill="#555"/><path d="M7.2 6.8 L3 4.6 Q4 2 6.8 1.8 Z" fill="#f0862a"/><path d="M7.2 6.8 L6.8 1.8 Q10.8 1.4 12.4 4.2 L12.4 6.3 Z" fill="#7ad04a"/><path d="M7.2 6.8 L12.4 6.3 L12.4 8.2 L8.4 8.2 Z" fill="#e04450"/><rect x="1.6" y="8.2" width="10.8" height="1.2" fill="#f4f4f0"/><rect x="1" y="10.2" width="12" height="2.2" fill="#525250"/><rect x="10" y="10.8" width="1" height="1" fill="#bbb"/><rect x="12" y="10.8" width="0.8" height="1" fill="#bbb"/></g>
<rect x="753" y="223" width="16" height="11" fill="#8c8c8c" />
<rect x="770" y="223" width="15" height="11" fill="#333333" />
<text x="463.5" y="233" font-size="11.6" fill="#505050" font-weight="normal" textLength="93" lengthAdjust="spacingAndGlyphs"  stroke="#505050" stroke-width="0.22">Resize /dev/vda2</text>
<rect x="233" y="239" width="554" height="266" fill="#dcdad5" />
<rect x="240.5" y="246.5" width="538" height="52" fill="none" stroke="#ffffff"/>
<rect x="241.5" y="247.5" width="538" height="52" fill="none" stroke="#9d9a91"/>
<rect x="242" y="248" width="536" height="50" fill="#d3d3d3" />
<rect x="252" y="248" width="323" height="50" fill="#b39169" />
<rect x="260" y="256" width="307" height="34" fill="#f8f8ba" />
<rect x="575" y="248" width="193" height="50" fill="#a9a9a9" />
<rect x="576.5" y="253.5" width="9" height="40" fill="none" stroke="#d3d3d3"/>
<path d="M575 263.6 L585 272.9 L575 282.2 Z" fill="#000" shape-rendering="geometricPrecision"/>
<text x="308.2" y="318" font-size="13.4" fill="#000" font-weight="normal" textLength="174.5" lengthAdjust="spacingAndGlyphs"  stroke="#000" stroke-width="0.22">Minimum size: 162811 MiB</text>
<text x="532.7" y="318" font-size="13.4" fill="#000" font-weight="normal" textLength="178" lengthAdjust="spacingAndGlyphs"  stroke="#000" stroke-width="0.22">Maximum size: 265215 MiB</text>
<text x="369.4" y="349" font-size="13.4" fill="#000" font-weight="normal" textLength="178.8" lengthAdjust="spacingAndGlyphs"  stroke="#000" stroke-width="0.22">Free space preceding (MiB):</text>
<text x="369.4" y="379" font-size="13.4" fill="#000" font-weight="normal" textLength="100.8" lengthAdjust="spacingAndGlyphs"  stroke="#000" stroke-width="0.22">New size (MiB):</text>
<text x="369.4" y="409" font-size="13.4" fill="#000" font-weight="normal" textLength="174.5" lengthAdjust="spacingAndGlyphs"  stroke="#000" stroke-width="0.22">Free space following (MiB):</text>
<text x="369.4" y="441" font-size="13.4" fill="#000" font-weight="normal" textLength="53.8" lengthAdjust="spacingAndGlyphs"  stroke="#000" stroke-width="0.22">Align to:</text>
<rect x="561" y="332" width="90" height="25" fill="#ffffff" />
<rect x="561" y="332" width="89" height="1" fill="#a8a59c" />
<rect x="561" y="332" width="1" height="24" fill="#a8a59c" />
<rect x="562" y="333" width="88" height="22" fill="#000000" />
<rect x="562" y="333" width="1" height="23" fill="#000000" />
<rect x="563" y="334" width="74" height="21" fill="#edebe7" />
<rect x="563" y="334" width="74" height="1" fill="#ffffff" />
<rect x="563" y="334" width="1" height="21" fill="#ffffff" />
<rect x="638" y="334" width="11" height="21" fill="#dcdad5" />
<rect x="638" y="334" width="11" height="1" fill="#ffffff" />
<rect x="638" y="343" width="11" height="1" fill="#a8a59a" />
<rect x="638" y="344" width="11" height="1" fill="#ffffff" />
<rect x="638" y="354" width="11" height="1" fill="#a8a59a" />
<path d="M640.5 340 L646.5 340 L643.5 337 Z" fill="#8a8a8a" shape-rendering="geometricPrecision"/>
<path d="M640.5 348 L646.5 348 L643.5 351 Z" fill="#8a8a8a" shape-rendering="geometricPrecision"/>
<text x="565.8" y="349" font-size="13.4" fill="#7a7a7a" font-weight="normal" textLength="6.8" lengthAdjust="spacingAndGlyphs"  stroke="#7a7a7a" stroke-width="0.22">0</text>
<rect x="561" y="362" width="90" height="25" fill="#ffffff" />
<rect x="561" y="362" width="89" height="1" fill="#a8a59c" />
<rect x="561" y="362" width="1" height="24" fill="#a8a59c" />
<rect x="562" y="363" width="88" height="22" fill="#000000" />
<rect x="562" y="363" width="1" height="23" fill="#000000" />
<rect x="563" y="364" width="74" height="21" fill="#ffffff" />
<rect x="638" y="364" width="11" height="21" fill="#dcdad5" />
<rect x="638" y="364" width="11" height="1" fill="#ffffff" />
<rect x="638" y="373" width="11" height="1" fill="#a8a59a" />
<rect x="638" y="374" width="11" height="1" fill="#ffffff" />
<rect x="638" y="384" width="11" height="1" fill="#a8a59a" />
<path d="M640.5 370 L646.5 370 L643.5 367 Z" fill="#000000" shape-rendering="geometricPrecision"/>
<path d="M640.5 378 L646.5 378 L643.5 381 Z" fill="#000000" shape-rendering="geometricPrecision"/>
<rect x="565" y="366" width="48" height="17" fill="#4b6a8b" />
<text x="565.8" y="379" font-size="13.4" fill="#ffffff" font-weight="normal" textLength="47" lengthAdjust="spacingAndGlyphs"  stroke="#ffffff" stroke-width="0.22">162815</text>
<rect x="561" y="392" width="90" height="25" fill="#ffffff" />
<rect x="561" y="392" width="89" height="1" fill="#a8a59c" />
<rect x="561" y="392" width="1" height="24" fill="#a8a59c" />
<rect x="562" y="393" width="88" height="22" fill="#000000" />
<rect x="562" y="393" width="1" height="23" fill="#000000" />
<rect x="563" y="394" width="74" height="21" fill="#ffffff" />
<rect x="638" y="394" width="11" height="21" fill="#dcdad5" />
<rect x="638" y="394" width="11" height="1" fill="#ffffff" />
<rect x="638" y="403" width="11" height="1" fill="#a8a59a" />
<rect x="638" y="404" width="11" height="1" fill="#ffffff" />
<rect x="638" y="414" width="11" height="1" fill="#a8a59a" />
<path d="M640.5 400 L646.5 400 L643.5 397 Z" fill="#000000" shape-rendering="geometricPrecision"/>
<path d="M640.5 408 L646.5 408 L643.5 411 Z" fill="#000000" shape-rendering="geometricPrecision"/>
<text x="565.8" y="409" font-size="13.4" fill="#000000" font-weight="normal" textLength="47" lengthAdjust="spacingAndGlyphs"  stroke="#000000" stroke-width="0.22">102400</text>
<rect x="561" y="422" width="90" height="29" fill="#dcdad5" />
<rect x="561" y="422" width="90" height="1" fill="#ffffff" />
<rect x="561" y="422" width="1" height="29" fill="#ffffff" />
<rect x="562" y="449" width="88" height="1" fill="#c5c1b6" />
<rect x="649" y="423" width="1" height="27" fill="#c5c1b6" />
<rect x="561" y="450" width="90" height="1" fill="#000000" />
<rect x="650" y="422" width="1" height="29" fill="#000000" />
<text x="567.5" y="441" font-size="13.4" fill="#000" font-weight="normal" textLength="23" lengthAdjust="spacingAndGlyphs"  stroke="#000" stroke-width="0.22">MiB</text>
<rect x="628" y="426" width="1" height="21" fill="#a8a59c" />
<rect x="629" y="426" width="1" height="21" fill="#ffffff" />
<path d="M633 434 L644 434 L638.5 440 Z" fill="#000" shape-rendering="geometricPrecision"/>
<rect x="602" y="466" width="86" height="32" fill="#dcdad5" />
<rect x="602" y="466" width="86" height="1" fill="#ffffff" />
<rect x="602" y="466" width="1" height="32" fill="#ffffff" />
<rect x="603" y="496" width="84" height="1" fill="#c5c1b6" />
<rect x="686" y="467" width="1" height="30" fill="#c5c1b6" />
<rect x="602" y="497" width="86" height="1" fill="#000000" />
<rect x="687" y="466" width="1" height="32" fill="#000000" />
<rect x="694" y="466" width="86" height="32" fill="#dcdad5" />
<rect x="694" y="466" width="86" height="1" fill="#ffffff" />
<rect x="694" y="466" width="1" height="32" fill="#ffffff" />
<rect x="695" y="496" width="84" height="1" fill="#c5c1b6" />
<rect x="778" y="467" width="1" height="30" fill="#c5c1b6" />
<rect x="694" y="497" width="86" height="1" fill="#000000" />
<rect x="779" y="466" width="1" height="32" fill="#000000" />
<text x="634" y="486" font-size="13.4" fill="#000" font-weight="normal" textLength="43.5" lengthAdjust="spacingAndGlyphs"  stroke="#000" stroke-width="0.22">Cancel</text>
<rect x="634" y="488" width="9" height="1" fill="#000" />
<text x="729.4" y="487" font-size="13.4" fill="#ffffff" font-weight="normal" textLength="41.5" lengthAdjust="spacingAndGlyphs"  stroke="#ffffff" stroke-width="0.22">Resize</text>
<text x="729.4" y="486" font-size="13.4" fill="#8d8d8a" font-weight="normal" textLength="41.5" lengthAdjust="spacingAndGlyphs"  stroke="#8d8d8a" stroke-width="0.22">Resize</text>
<g shape-rendering="geometricPrecision" stroke-linecap="round"><ellipse cx="622" cy="490.5" rx="7" ry="1.6" fill="#b8b6b0" opacity="0.6"/><line x1="620" y1="475" x2="626.4" y2="487" stroke="#c4141c" stroke-width="5.6" stroke-linecap="round"/><line x1="628.6" y1="476" x2="617.4" y2="485.6" stroke="#c4141c" stroke-width="5.6" stroke-linecap="round"/><line x1="620" y1="475" x2="626.4" y2="487" stroke="#f27478" stroke-width="3.6" stroke-linecap="round"/><line x1="628.6" y1="476" x2="617.4" y2="485.6" stroke="#f27478" stroke-width="3.6" stroke-linecap="round"/><circle cx="623" cy="481" r="1.8" fill="#f03a40"/></g>
<g mask="url(#dither)"><g shape-rendering="geometricPrecision" transform="translate(701.5,473.5) scale(0.88) translate(-276.5,-157)"><path d="M276.5 163 Q276.5 162 277.5 162 H285.5 V157.2 L293.8 167 L285.5 176.8 V172 H277.5 Q276.5 172 276.5 171 Z" fill="#80b060" stroke="#3a7a20" stroke-width="1.2"/><rect x="294.3" y="157.3" width="4.6" height="19.4" rx="1.4" fill="#80b060" stroke="#3a7a20" stroke-width="1.2"/></g></g>
<rect x="0" y="748" width="1024" height="20" fill="#3a3a3a" />
<rect x="1" y="749" width="1022" height="18" fill="#e4e4e9" />
<rect x="1" y="749" width="1022" height="1" fill="#f3f3f6" />
<rect x="1" y="766" width="1022" height="1" fill="#f3f3f6" />
<rect x="1" y="749" width="1" height="18" fill="#f3f3f6" />
<text x="20.2" y="762" font-size="11.8" fill="#474747" font-weight="normal" textLength="70.5" lengthAdjust="spacingAndGlyphs"  stroke="#474747" stroke-width="0.22">Workspace 1</text>
<text x="117.2" y="762" font-size="11.8" fill="#474747" font-weight="normal" textLength="111" lengthAdjust="spacingAndGlyphs"  stroke="#474747" stroke-width="0.22">10 May, Fri 00:58:13</text>
<text x="417.5" y="762" font-size="11.8" fill="#474747" font-weight="normal" textLength="101.2" lengthAdjust="spacingAndGlyphs"  stroke="#474747" stroke-width="0.22">/dev/vda - GParted</text>
<path d="M7 758 L12 755.5 L12 760.5 Z" transform="translate(0,0)" fill="#474747" shape-rendering="geometricPrecision"/>
<rect x="7" y="757" width="2" height="2" fill="#474747" />
<path d="M103 758 L98 755.5 L98 760.5 Z" fill="#474747" shape-rendering="geometricPrecision"/>
<rect x="102" y="757" width="2" height="2" fill="#474747" />
<path d="M7 758 L12 755.5 L12 760.5 Z" transform="translate(234,0)" fill="#474747" shape-rendering="geometricPrecision"/>
<rect x="241" y="757" width="2" height="2" fill="#474747" />
<path d="M264 758 L259 755.5 L259 760.5 Z" fill="#474747" shape-rendering="geometricPrecision"/>
<rect x="263" y="757" width="2" height="2" fill="#474747" />
<g transform="translate(273,751) scale(1.07)" shape-rendering="geometricPrecision"><rect x="0" y="0" width="14" height="13" rx="0.6" fill="#383838"/><rect x="1" y="1" width="12" height="9.2" fill="#f4f4f0"/><rect x="1.6" y="1.6" width="10.8" height="7.2" fill="#d8d8d4"/><path d="M1.6 1.6 H4 L1.6 4.5 Z" fill="#555"/><path d="M7.2 6.8 L3 4.6 Q4 2 6.8 1.8 Z" fill="#f0862a"/><path d="M7.2 6.8 L6.8 1.8 Q10.8 1.4 12.4 4.2 L12.4 6.3 Z" fill="#7ad04a"/><path d="M7.2 6.8 L12.4 6.3 L12.4 8.2 L8.4 8.2 Z" fill="#e04450"/><rect x="1.6" y="8.2" width="10.8" height="1.2" fill="#f4f4f0"/><rect x="1" y="10.2" width="12" height="2.2" fill="#525250"/><rect x="10" y="10.8" width="1" height="1" fill="#bbb"/><rect x="12" y="10.8" width="0.8" height="1" fill="#bbb"/></g>
<rect x="647" y="750" width="376" height="16" fill="#6d6d6d" />
<rect x="647" y="750" width="376" height="1" fill="#5c5c5c" />
<g transform="translate(649,752) scale(1.0)" shape-rendering="geometricPrecision"><rect x="0" y="0" width="14" height="13" rx="0.6" fill="#383838"/><rect x="1" y="1" width="12" height="9.2" fill="#f4f4f0"/><rect x="1.6" y="1.6" width="10.8" height="7.2" fill="#d8d8d4"/><path d="M1.6 1.6 H4 L1.6 4.5 Z" fill="#555"/><path d="M7.2 6.8 L3 4.6 Q4 2 6.8 1.8 Z" fill="#f0862a"/><path d="M7.2 6.8 L6.8 1.8 Q10.8 1.4 12.4 4.2 L12.4 6.3 Z" fill="#7ad04a"/><path d="M7.2 6.8 L12.4 6.3 L12.4 8.2 L8.4 8.2 Z" fill="#e04450"/><rect x="1.6" y="8.2" width="10.8" height="1.2" fill="#f4f4f0"/><rect x="1" y="10.2" width="12" height="2.2" fill="#525250"/><rect x="10" y="10.8" width="1" height="1" fill="#bbb"/><rect x="12" y="10.8" width="0.8" height="1" fill="#bbb"/></g>
<text x="797.6" y="762" font-size="11.8" fill="#e8e8e8" font-weight="normal" textLength="93.5" lengthAdjust="spacingAndGlyphs"  stroke="#e8e8e8" stroke-width="0.22">Resize /dev/vda2</text>
</svg>
</body></html>
